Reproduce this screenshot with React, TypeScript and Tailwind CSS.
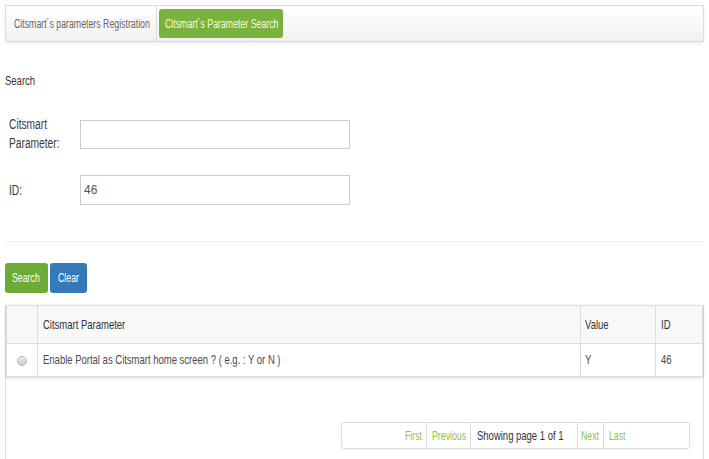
import { useState, type ReactNode } from "react";

const font = { fontFamily: '"Liberation Sans", Arial, sans-serif' };

// the screenshot's text is a narrow face, so glyphs are squeezed sideways
const T = ({ children }: { children: ReactNode }) => (
  <span className="inline-block whitespace-nowrap origin-left scale-x-[0.73]">{children}</span>
);

const rows = [
  { param: "Enable Portal as Citsmart home screen ? ( e.g. : Y or N )", value: "Y", id: "46" },
];

const App = () => {
  const [param, setParam] = useState("");
  const [id, setId] = useState("46");

  return (
    <div className="w-[709px] h-[459px] overflow-hidden bg-white text-[#333] px-[5px] pt-[5px]" style={font}>
      {/* tabs */}
      <div className="flex items-center w-[699px] h-[37px] border border-[#dcdcdc] bg-gradient-to-b from-white to-[#f1f1f1] shadow-[0_2px_3px_rgba(0,0,0,0.06)]">
        <div className="w-[151px] h-full flex items-center pl-[8px] text-[12px] text-[#666] border-r border-[#dcdcdc]">
          <T>Citsmart´s parameters Registration</T>
        </div>
        <div className="ml-[2px] w-[124px] h-[29px] flex items-center pl-[6px] rounded-[3px] bg-[#79b23c] text-[12px] text-[#f7ffd8]">
          <T>Citsmart´s Parameter Search</T>
        </div>
      </div>

      <div className="mt-[31px] h-[16px] text-[13px] leading-[16px] text-[#333]">
        <T>Search</T>
      </div>

      <div className="mt-[26px] flex items-center">
        <div className="w-[75px] pl-[4px] text-[14px] leading-[19px] text-[#3a3a3a] flex flex-col">
          <T>Citsmart</T>
          <T>Parameter:</T>
        </div>
        <input
          value={param}
          onChange={(e) => setParam(e.target.value)}
          className="w-[270px] h-[29px] border border-[#ccc] px-[8px] text-[12px] outline-none"
        />
      </div>

      <div className="mt-[22px] flex items-center">
        <div className="w-[75px] pl-[4px] text-[14px] text-[#3a3a3a]">
          <T>ID:</T>
        </div>
        <input
          value={id}
          onChange={(e) => setId(e.target.value)}
          className="w-[270px] h-[30px] border border-[#ccc] px-[3px] text-[12px] text-[#555] outline-none"
        />
      </div>

      <div className="mt-[36px] w-[699px] border-t border-[#eee]" />

      <div className="mt-[21px] flex gap-[2px]">
        <button className="w-[43px] h-[30px] pl-[7px] text-left rounded-[3px] bg-[#6cab36] text-white text-[12px]">
          <T>Search</T>
        </button>
        <button className="w-[37px] h-[30px] pl-[8px] text-left rounded-[3px] bg-[#347ab7] text-white text-[12px]">
          <T>Clear</T>
        </button>
      </div>

      {/* grid panel */}
      <div className="mt-[12px] w-[699px] h-[160px] border-x border-[#ddd]">
        <table className="w-full border-collapse table-fixed text-[13px] shadow-[0_1px_3px_rgba(0,0,0,0.15)]">
          <thead>
            <tr className="h-[38px] bg-[#f8f8f8] text-[#333]">
              <th className="w-[31px] border border-[#ddd]" />
              <th className="text-left font-normal pl-[5px] border border-[#ddd]">
                <T>Citsmart Parameter</T>
              </th>
              <th className="w-[75px] text-left font-normal pl-[4px] border border-[#ddd]">
                <T>Value</T>
              </th>
              <th className="w-[47px] text-left font-normal pl-[5px] border border-[#ddd]">
                <T>ID</T>
              </th>
            </tr>
          </thead>
          <tbody>
            {rows.map((r) => (
              <tr key={r.id} className="h-[33px] text-[#4a4a4a]">
                <td className="border border-[#ddd] text-center">
                  <span className="inline-block w-[10px] h-[10px] rounded-full bg-gradient-to-b from-[#eee] to-[#c9c9c9] border border-[#bbb] align-middle" />
                </td>
                <td className="pl-[5px] border border-[#ddd]">
                  <T>{r.param}</T>
                </td>
                <td className="pl-[4px] border border-[#ddd]">
                  <T>{r.value}</T>
                </td>
                <td className="pl-[5px] border border-[#ddd]">
                  <T>{r.id}</T>
                </td>
              </tr>
            ))}
          </tbody>
        </table>

        <div className="mt-[45px] ml-[335px] w-[349px] h-[27px] flex border border-[#ddd] rounded-[3px] text-[12px] shadow-[0_1px_2px_rgba(0,0,0,0.05)]">
          <div className="w-[85px] h-full flex items-center pl-[63px] text-[#8cc152] border-r border-[#ddd]">
            <T>First</T>
          </div>
          <div className="w-[44px] h-full flex items-center pl-[5px] text-[#8cc152] border-r border-[#ddd]">
            <T>Previous</T>
          </div>
          <div className="w-[107px] h-full flex items-center pl-[6px] text-[13px] text-[#333] border-r border-[#ddd]">
            <T>Showing page 1 of 1</T>
          </div>
          <div className="w-[26px] h-full flex items-center pl-[3px] text-[#8cc152] border-r border-[#ddd]">
            <T>Next</T>
          </div>
          <div className="flex-1 h-full flex items-center pl-[5px] text-[#8cc152]">
            <T>Last</T>
          </div>
        </div>
      </div>
    </div>
  );
};

export default App;
